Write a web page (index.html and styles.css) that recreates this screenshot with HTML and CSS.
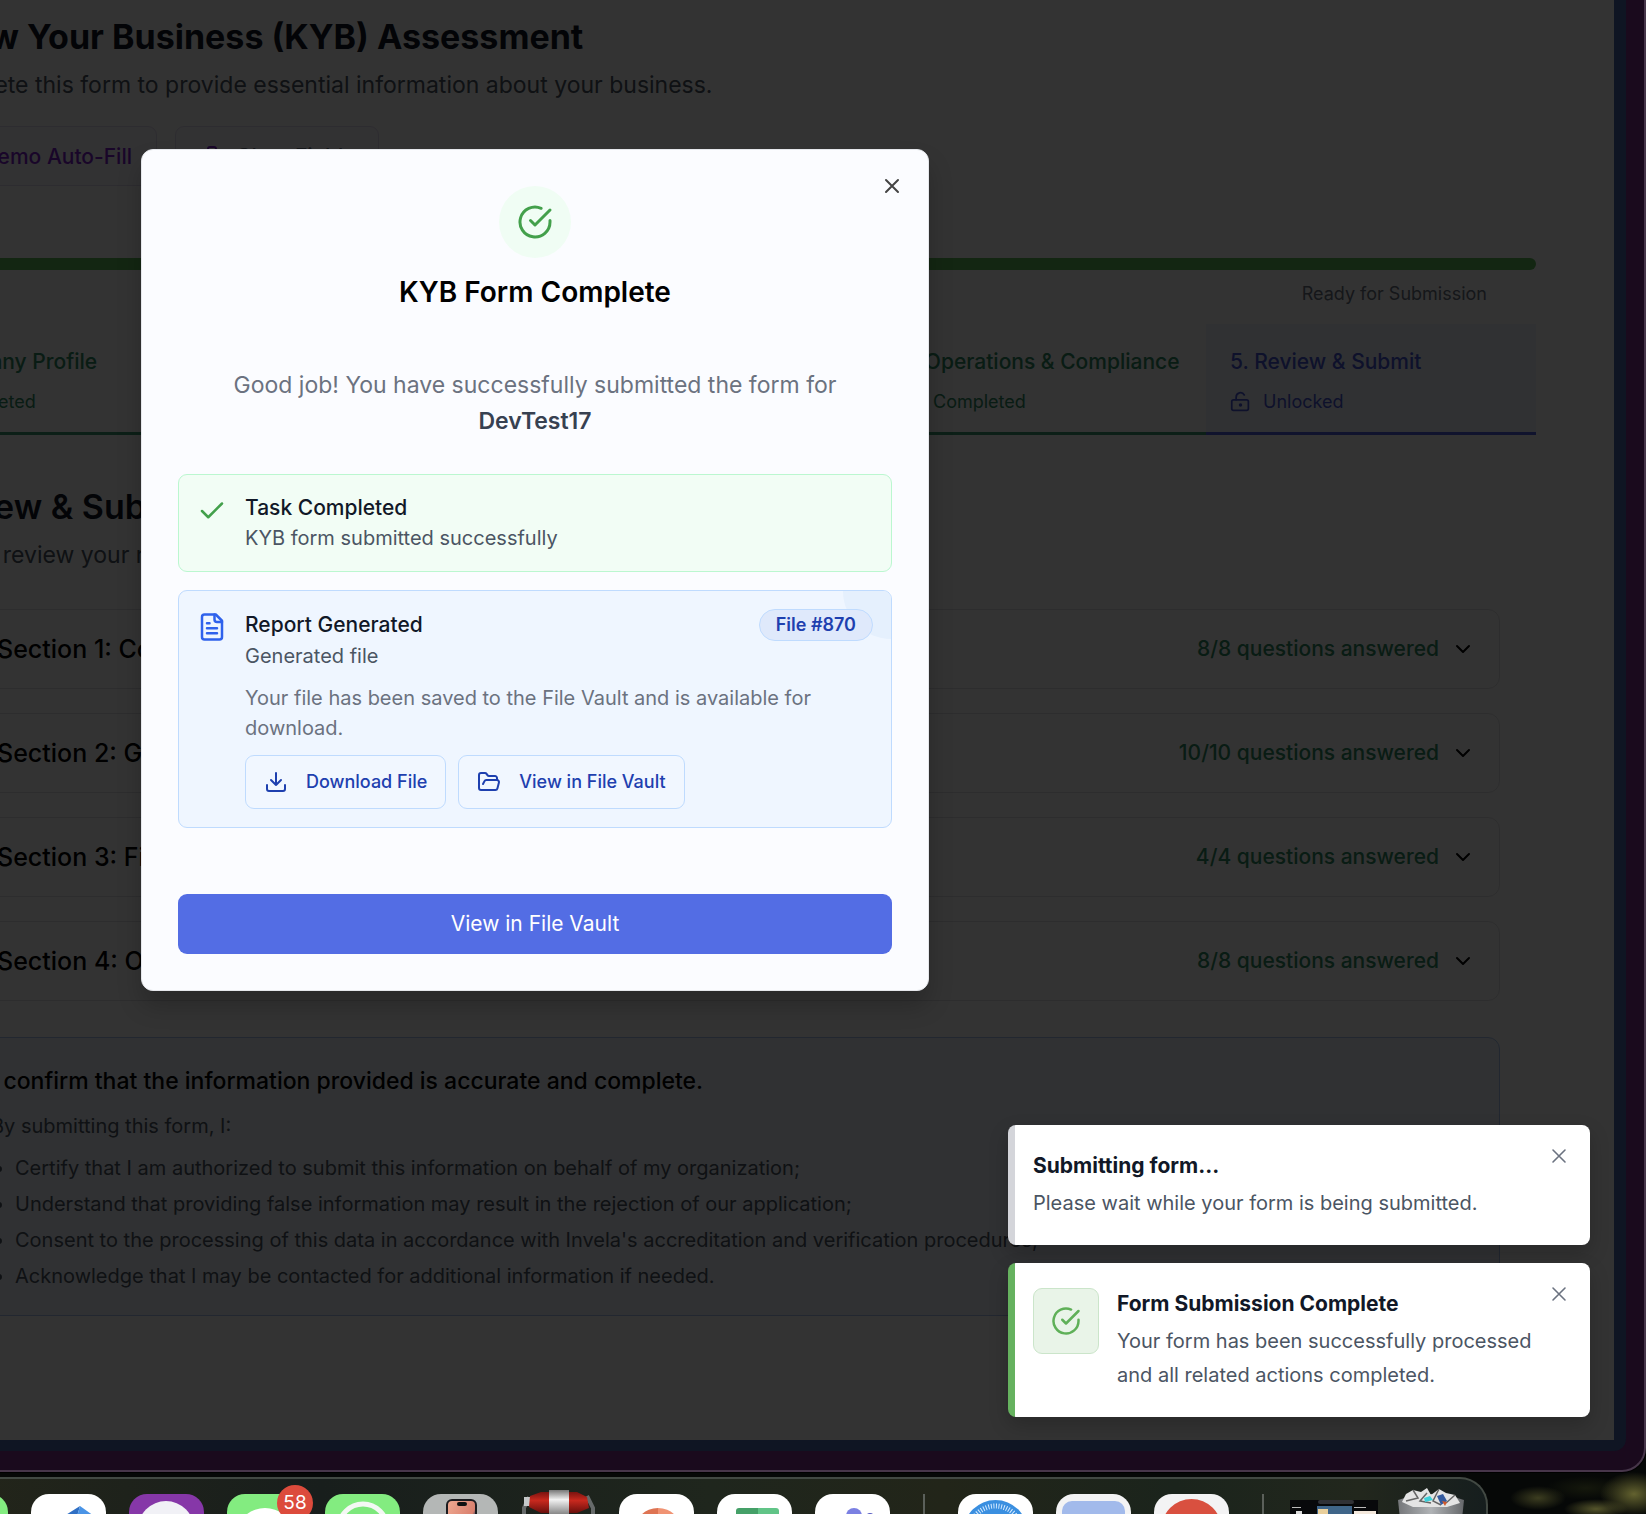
FILE: index.html
```html
<!DOCTYPE html>
<html lang="en">
<head>
<meta charset="utf-8">
<meta name="viewport" content="width=device-width, initial-scale=1">
<title>KYB Assessment</title>
<link rel="stylesheet" href="styles.css">
</head>
<body>
<svg class="sprite" aria-hidden="true">
  <symbol id="i-check-circle" viewBox="0 0 24 24"><path d="M22 11.08V12a10 10 0 1 1-5.93-9.14"/><path d="m9 11 3 3L22 4"/></symbol>
  <symbol id="i-check" viewBox="0 0 24 24"><path d="M20 6 9 17l-5-5"/></symbol>
  <symbol id="i-x" viewBox="0 0 24 24"><path d="M18 6 6 18M6 6l12 12"/></symbol>
  <symbol id="i-chevron" viewBox="0 0 24 24"><path d="m6 9 6 6 6-6"/></symbol>
  <symbol id="i-file" viewBox="0 0 24 24"><path d="M15 2H6a2 2 0 0 0-2 2v16a2 2 0 0 0 2 2h12a2 2 0 0 0 2-2V7Z"/><path d="M14 2v4a2 2 0 0 0 2 2h4M10 9H8M16 13H8M16 17H8"/></symbol>
  <symbol id="i-download" viewBox="0 0 24 24"><path d="M21 15v4a2 2 0 0 1-2 2H5a2 2 0 0 1-2-2v-4M7 10l5 5 5-5M12 15V3"/></symbol>
  <symbol id="i-folder" viewBox="0 0 24 24"><path d="m6 14 1.5-2.9A2 2 0 0 1 9.24 10H20a2 2 0 0 1 1.94 2.5l-1.54 6a2 2 0 0 1-1.95 1.5H4a2 2 0 0 1-2-2V5a2 2 0 0 1 2-2h3.9a2 2 0 0 1 1.69.9l.81 1.2a2 2 0 0 0 1.67.9H18a2 2 0 0 1 2 2v2"/></symbol>
  <symbol id="i-trash" viewBox="0 0 24 24"><path d="M3 6h18M19 6v14a2 2 0 0 1-2 2H7a2 2 0 0 1-2-2V6M8 6V4a2 2 0 0 1 2-2h4a2 2 0 0 1 2 2v2"/></symbol>
  <symbol id="i-unlock" viewBox="0 0 24 24"><circle cx="12" cy="16" r="1"/><rect x="2" y="10" width="19" height="12" rx="2"/><path d="M7 10V7a5 5 0 0 1 9.33-2.5"/></symbol>
</svg>

<div class="window">
  <div class="frame">
    <div class="viewport">
      <main class="page">
        <header class="intro">
          <h1>Know Your Business (KYB) Assessment</h1>
          <p class="lead">Complete this form to provide essential information about your business.</p>
        </header>
        <div class="tools">
          <button class="tool demo" type="button">Demo Auto-Fill</button>
          <button class="tool" type="button"><svg class="icon s24"><use href="#i-trash"/></svg>Clear Fields</button>
        </div>
        <div class="progress"></div>
        <p class="status">Ready for Submission</p>
        <nav class="tabs">
          <a class="tab" href="#s1"><span class="tab-name">1. Company Profile</span><span class="tab-state"><svg class="icon s21"><use href="#i-check-circle"/></svg>Completed</span></a>
          <a class="tab" href="#s2" aria-label="Section 2"></a>
          <a class="tab" href="#s3" aria-label="Section 3"></a>
          <a class="tab" href="#s4"><span class="tab-name">4. Operations &amp; Compliance</span><span class="tab-state"><svg class="icon s21"><use href="#i-check-circle"/></svg>Completed</span></a>
          <a class="tab current" href="#review"><span class="tab-name">5. Review &amp; Submit</span><span class="tab-state"><svg class="icon s21"><use href="#i-unlock"/></svg>Unlocked</span></a>
        </nav>
        <section class="review" id="review">
          <h2>Review &amp; Submit</h2>
          <p class="lead">Please review your responses</p>
          <div class="sections">
            <button class="section" type="button" id="s1"><span class="section-name">Section 1: Company</span><span class="answered">8/8 questions answered</span><svg class="icon s24"><use href="#i-chevron"/></svg></button>
            <button class="section" type="button" id="s2"><span class="section-name">Section 2: Governance</span><span class="answered">10/10 questions answered</span><svg class="icon s24"><use href="#i-chevron"/></svg></button>
            <button class="section" type="button" id="s3"><span class="section-name">Section 3: Financial</span><span class="answered">4/4 questions answered</span><svg class="icon s24"><use href="#i-chevron"/></svg></button>
            <button class="section" type="button" id="s4"><span class="section-name">Section 4: Operations</span><span class="answered">8/8 questions answered</span><svg class="icon s24"><use href="#i-chevron"/></svg></button>
          </div>
          <div class="consent">
            <p class="consent-title">I confirm that the information provided is accurate and complete.</p>
            <p class="consent-sub">By submitting this form, I:</p>
            <ul>
              <li>Certify that I am authorized to submit this information on behalf of my organization;</li>
              <li>Understand that providing false information may result in the rejection of our application;</li>
              <li>Consent to the processing of this data in accordance with Invela's accreditation and verification procedures;</li>
              <li>Acknowledge that I may be contacted for additional information if needed.</li>
            </ul>
          </div>
        </section>
      </main>

      <div class="overlay">
        <div class="modal" role="dialog" aria-modal="true" aria-labelledby="done-title">
          <button class="close modal-close" type="button" aria-label="Close"><svg class="icon s24"><use href="#i-x"/></svg></button>
          <div class="badge-ok"><svg class="icon s36"><use href="#i-check-circle"/></svg></div>
          <h2 class="modal-title" id="done-title">KYB Form Complete</h2>
          <p class="modal-text">Good job! You have successfully submitted the form for <strong>DevTest17</strong></p>
          <div class="card card-ok">
            <svg class="icon s30"><use href="#i-check"/></svg>
            <div class="card-body">
              <h3>Task Completed</h3>
              <p>KYB form submitted successfully</p>
            </div>
          </div>
          <div class="card card-file">
            <svg class="icon s30"><use href="#i-file"/></svg>
            <div class="card-body">
              <div class="card-head"><h3>Report Generated</h3><span class="pill">File #870</span></div>
              <p>Generated file</p>
              <p class="note">Your file has been saved to the File Vault and is available for download.</p>
              <div class="actions">
                <button class="action" type="button"><svg class="icon s24"><use href="#i-download"/></svg>Download File</button>
                <button class="action" type="button"><svg class="icon s24"><use href="#i-folder"/></svg>View in File Vault</button>
              </div>
            </div>
          </div>
          <button class="primary" type="button">View in File Vault</button>
        </div>
      </div>

      <div class="toasts">
        <div class="toast" role="status">
          <div class="toast-body">
            <p class="toast-title">Submitting form...</p>
            <p class="toast-text">Please wait while your form is being submitted.</p>
          </div>
          <button class="close toast-close" type="button" aria-label="Dismiss"><svg class="icon s24 thin"><use href="#i-x"/></svg></button>
        </div>
        <div class="toast toast-ok" role="status">
          <div class="toast-icon"><svg class="icon s30"><use href="#i-check-circle"/></svg></div>
          <div class="toast-body">
            <p class="toast-title">Form Submission Complete</p>
            <p class="toast-text">Your form has been successfully processed and all related actions completed.</p>
          </div>
          <button class="close toast-close" type="button" aria-label="Dismiss"><svg class="icon s24 thin"><use href="#i-x"/></svg></button>
        </div>
      </div>
    </div>
  </div>
</div>

<div class="dock">
  <div class="app green"></div>
  <div class="app"><svg viewBox="0 0 75 75"><path d="M30 24 49 12 41 40 22 40Z" fill="#2f6fc4"/><path d="M49 12 63 22V40H41Z" fill="#4a94e6"/></svg></div>
  <div class="app purple"><svg viewBox="0 0 75 75"><circle cx="37" cy="35" r="28" fill="#f1f1f6"/></svg></div>
  <div class="app green"><svg viewBox="0 0 75 75"><ellipse cx="38" cy="36" rx="26" ry="22" fill="#fff"/></svg><span class="count">58</span></div>
  <div class="app green"><svg viewBox="0 0 75 75"><circle cx="38" cy="34" r="24" fill="#7de87c" stroke="#f4f8f4" stroke-width="5"/></svg></div>
  <div class="app gray"><svg viewBox="0 0 75 75"><defs><linearGradient id="ph" x1="0" x2="1" y2="1"><stop stop-color="#f0aa92"/><stop offset=".55" stop-color="#d9806e"/><stop offset=".6" stop-color="#6d5560"/><stop offset="1" stop-color="#c59d9d"/></linearGradient></defs><rect x="24" y="6" width="29" height="60" rx="5" fill="url(#ph)" stroke="#1c1c20" stroke-width="2"/><rect x="34" y="8" width="10" height="4" rx="2" fill="#111"/></svg></div>
  <div class="app bare"><svg viewBox="0 0 75 75"><defs><linearGradient id="st" x2="0" y2="1"><stop stop-color="#777"/><stop offset=".4" stop-color="#f2f2f2"/><stop offset="1" stop-color="#888"/></linearGradient><linearGradient id="rd" x2="0" y2="1"><stop stop-color="#7a130f"/><stop offset=".4" stop-color="#c8291e"/><stop offset="1" stop-color="#6a0f0c"/></linearGradient></defs><path d="M3 40V14L8 3M72 40V14L66 2" stroke="#666a6a" stroke-width="4" fill="none"/><path d="M8 20h60v24H6Z" fill="#cfcfd2"/><rect x="3" y="3" width="8" height="9" fill="#c5c9ca"/><path d="M9 2 20-2H56l10 5 2 11-12 5H20L8 13Z" fill="url(#rd)"/><rect x="28" y="-4" width="20" height="24" fill="url(#st)"/></svg></div>
  <div class="app"><svg viewBox="0 0 75 75"><path d="M39 14a24 24 0 0 0-24 24h24Z" fill="#de7453"/><path d="M39 14a24 24 0 0 1 24 24H39Z" fill="#f09373"/></svg></div>
  <div class="app"><svg viewBox="0 0 75 75"><path d="M19 40V17q0-3 3-3h19v26Z" fill="#45a068"/><path d="M41 14h18q3 0 3 3v23H41Z" fill="#61c487"/></svg></div>
  <div class="app"><svg viewBox="0 0 75 75"><circle cx="39" cy="22" r="8" fill="#7b80e2"/><circle cx="55" cy="24" r="5" fill="#5459c0"/><path d="M24 32h30v10H24Z" fill="#6268cf"/></svg></div>
  <div class="divider"></div>
  <div class="app"><svg viewBox="0 0 75 75"><circle cx="37.500" cy="38" r="32" fill="#3a8fe0"/><circle cx="37.500" cy="38" r="26" fill="none" stroke="#d6ebff" stroke-width="5" stroke-dasharray="1 1.600"/></svg></div>
  <div class="app pale"><svg viewBox="0 0 75 75"><rect x="6" y="7" width="63" height="60" rx="10" fill="#a2baeb"/></svg></div>
  <div class="app pale"><svg viewBox="0 0 75 75"><circle cx="37.500" cy="35" r="30" fill="#d9503f"/></svg></div>
  <div class="divider"></div>
  <div class="thumb"><svg viewBox="0 0 88 50"><rect width="88" height="50" fill="#08090b"/><rect x="28" width="36" height="4" rx="2" fill="#303136"/><rect x="27" y="6" width="35" height="40" fill="#3f6589"/><rect x="28" y="9" width="10" height="6" fill="#e9cf9b"/><rect x="64" y="11" width="22" height="4" fill="#f3e8dc"/><rect x="6" y="11" width="6" height="3" fill="#ddd"/><rect x="2" y="7" width="9" height="1" fill="#bbb"/><rect x="64" y="7" width="12" height="1" fill="#bbb"/></svg></div>
  <div class="bin"><svg viewBox="0 0 68 60"><defs><linearGradient id="bn"><stop stop-color="#75777a"/><stop offset=".5" stop-color="#b0b3b6"/><stop offset="1" stop-color="#66686b"/></linearGradient></defs><path d="M1 12Q34 0 67 12L62 60H6Z" fill="url(#bn)"/><path d="M5 14 9 6 16 2 24 4 30 0 34 7 42 1 49 5 58 7 63 15 50 19H16Z" fill="#e4e4e4"/><path d="m16 2 5 8-12 3M30 5l-7 8 11 2M42 1l-6 12 8 4M58 7l-9 8" stroke="#666" stroke-width="1.500" fill="none"/><path d="m27 10 6-2 3 4-8 2Z" fill="#3ed0d8"/><path d="m40 8 6-2 4 7-6 4Z" fill="#345a9e"/><path d="m45 13 5 1-2 4Z" fill="#d05a2c"/></svg></div>
</div>
</body>
</html>
```
FILE: styles.css
```css
* { box-sizing: border-box; }
body {
  margin: 0;
  height: 100vh;
  overflow: hidden;
  display: flex;
  flex-direction: column;
  gap: 5px;
  font-family: Inter, "Liberation Sans", sans-serif;
  font-size: 21px;
  line-height: 30px;
  color: #111827;
  background:
    radial-gradient(ellipse 34px 22px at right 12px bottom 20px, #63622f, transparent),
    radial-gradient(ellipse 32px 10px at right 50px bottom 5px, #55552b, transparent),
    radial-gradient(ellipse 28px 12px at right 108px bottom 16px, #3c3d20, transparent),
    radial-gradient(ellipse 40px 12px at right 60px bottom 26px, #15180c, transparent),
    #060807;
}
h1, h2, h3, p, ul { margin: 0; }
button { font: inherit; color: inherit; margin: 0; cursor: pointer; }
.sprite { position: absolute; width: 0; height: 0; }
.icon { flex: none; display: block; fill: none; stroke: currentColor; stroke-width: 2; stroke-linecap: round; stroke-linejoin: round; }
.thin { stroke-width: 1.6; }
.s21 { width: 21px; height: 21px; }
.s24 { width: 24px; height: 24px; }
.s30 { width: 30px; height: 30px; }
.s36 { width: 36px; height: 36px; }

/* browser window */
.window {
  flex: 1;
  min-height: 0;
  display: flex;
  padding: 0 18px 19px 0;
  background: #1a0a1d;
  border: solid #47364a;
  border-width: 0 2px 2px 0;
  border-bottom-right-radius: 24px;
  box-shadow: 0 0 0 1px #000;
}
.frame { flex: 1; min-width: 0; display: flex; padding: 0 12px 11px 0; background: #0f1523; border-bottom-right-radius: 12px; }
.viewport { flex: 1; min-width: 0; position: relative; overflow: hidden; background: #fff; }

/* form page */
.page { margin-left: -114px; padding: 15px 78px 0 0; color: #000; }
.intro { padding-left: 38px; }
h1 { font-size: 34px; line-height: 44px; font-weight: 700; color: #111827; white-space: nowrap; }
h2 { font-size: 34px; line-height: 44px; font-weight: 600; color: #111827; }
.lead { margin-top: 8px; font-size: 23px; line-height: 36px; color: #4b5563; white-space: nowrap; }
.tools { display: flex; gap: 18px; margin: 23px 0 0 18px; }
.tool { display: flex; align-items: center; gap: 12px; height: 60px; padding: 2px 24px 0; border: 1px solid #e0dcf0; border-radius: 9px; background: #faf8ff; font-weight: 500; color: #6b7280; }
.tool .icon { color: #7e22ce; }
.demo { width: 253px; justify-content: flex-end; color: #7e22ce; }
.progress { height: 12px; margin-top: 72px; border-radius: 6px; background: #5fbf5c; }
.status { margin-top: 12px; padding-right: 49px; text-align: right; font-size: 18px; line-height: 24px; color: #6b7280; }
.tabs { display: grid; grid-template-columns: repeat(5, 1fr); margin-top: 18px; }
.tab { display: flex; flex-direction: column; gap: 12px; padding: 23px 24px 18px; border-bottom: 3px solid #3d9b72; background: #fcfcfc; color: #2f8a63; text-decoration: none; white-space: nowrap; }
.tab-name { font-weight: 500; }
.tab-state { display: flex; align-items: center; gap: 12px; font-size: 18px; line-height: 25px; }
.current { background: #eff3ff; border-color: #4f5fe0; color: #4757d6; }
.review { padding: 50px 36px 0 38px; }
.sections { display: grid; gap: 24px; margin-top: 36px; }
.section { display: flex; align-items: center; height: 80px; padding: 0 24px 0 72px; border: 1px solid #e2e2e5; border-radius: 12px; background: none; text-align: left; }
.section-name { flex: 1; font-size: 25px; font-weight: 500; }
.answered { margin-right: 12px; font-weight: 500; color: #2f8a63; }
.consent { margin-top: 36px; padding: 25px 36px 21px 66px; border: 1px solid #a8c4ee; border-radius: 12px; background: #f0f6ff; color: #4b5563; font-size: 20px; white-space: nowrap; }
.consent-title { font-size: 23px; line-height: 36px; font-weight: 500; color: #000; }
.consent-sub { margin-top: 12px; }
.consent ul { margin-top: 9px; padding-left: 24px; line-height: 36px; }

/* dialog */
.overlay { position: absolute; inset: -300px 0 0 -544px; display: flex; align-items: center; justify-content: center; background: rgba(0, 0, 0, 0.8); }
.modal { position: relative; display: flex; flex-direction: column; align-items: stretch; width: 788px; padding: 36px; border: 1px solid #e5e7eb; border-radius: 12px; background: #fbfcff; box-shadow: 0 15px 24px rgba(0, 0, 0, 0.2); }
.close { display: flex; padding: 0; border: 0; background: none; color: #6b7280; }
.modal-close { position: absolute; top: 24px; right: 24px; color: #444; }
.badge-ok { align-self: center; display: flex; align-items: center; justify-content: center; width: 72px; height: 72px; border-radius: 50%; background: #f0fdf4; color: #43a04b; }
.modal-title { margin-top: 16px; font-size: 28px; line-height: 36px; text-align: center; color: #000; }
.modal-text { margin: 57px 36px 35px; font-size: 23px; line-height: 36px; text-align: center; color: #6b7280; }
.modal-text strong { display: block; font-weight: 600; color: #374151; }
.card { position: relative; display: flex; gap: 18px; padding: 18px; border: 1px solid; border-radius: 9px; overflow: hidden; color: #4b5563; font-size: 20px; }
.card > .icon { margin-top: 3px; }
.card-ok { background: #f2fdf5; border-color: #bbf7d0; }
.card-ok > .icon { color: #43a04b; }
.card-file { margin-top: 18px; background: #eff6ff; border-color: #bfdbfe; }
.card-file > .icon { color: #2f62ec; }
.card-file::before { content: ""; position: absolute; top: -48px; right: -48px; width: 96px; height: 96px; border-radius: 50%; background: #e5f0fd; }
.card-body { flex: 1; position: relative; }
h3 { font-size: 21px; line-height: 30px; font-weight: 500; color: #111827; }
.card-head { display: flex; align-items: center; justify-content: space-between; }
.pill { padding: 0 16px; border: 1px solid #bfdbfe; border-radius: 16px; background: #dfe9fb; font-size: 18px; font-weight: 600; color: #1e40af; }
.note { margin-top: 12px; color: #6b7280; }
.actions { display: flex; gap: 12px; margin-top: 12px; }
.action { display: flex; align-items: center; gap: 18px; height: 54px; padding: 0 18px; border: 1px solid #bfdbfe; border-radius: 9px; background: #f1f7ff; font-size: 18px; font-weight: 500; color: #1e40af; }
.primary { height: 60px; margin-top: 66px; border: 0; border-radius: 9px; background: #536de4; color: #fff; }

/* notifications */
.toasts { position: absolute; right: 24px; bottom: 23px; width: 582px; display: grid; gap: 18px; }
.toast { position: relative; display: flex; gap: 18px; padding: 25px; border-radius: 8px; overflow: hidden; background: linear-gradient(90deg, #d4d5da 7px, #fff 7px); box-shadow: 0 8px 20px rgba(0, 0, 0, 0.2); }
.toast-ok { background: linear-gradient(90deg, #66b25f 7px, #fff 7px); }
.toast-icon { display: flex; flex: none; align-items: center; justify-content: center; width: 66px; height: 66px; border: 1px solid #cbe5ca; border-radius: 9px; background: #e9f4e8; color: #5fb058; }
.toast-body { flex: 1; }
.toast-title { line-height: 32px; font-weight: 700; }
.toast-text { margin-top: 4px; padding-right: 20px; font-size: 20px; line-height: 34px; color: #4b5563; }
.toast-close { position: absolute; top: 19px; right: 19px; }

/* dock */
.dock { flex: none; align-self: flex-start; display: flex; gap: 23px; height: 37px; margin-left: -67px; padding: 15px 21px 0 0; border: solid #424943; border-width: 2px 2px 0 0; border-top-right-radius: 28px; background: linear-gradient(90deg, #24261a, #181e1c 25%, #1f261d 50%, #222519 65%, #1b241c 80%, #22271d 92%, #161e1e); }
.app { position: relative; flex: none; width: 75px; height: 75px; border-radius: 18px; background: #fff; }
.app svg, .thumb svg, .bin svg { display: block; width: 100%; overflow: visible; }
.green { background: #83ec80; }
.purple { background: #8637a8; }
.gray { background: #b4b7b6; }
.pale { background: #f3f3f4; }
.bare { background: none; }
.count { position: absolute; top: -9px; right: -11px; width: 36px; height: 36px; border-radius: 50%; background: #dc4b3c; color: #fff; font-size: 19px; line-height: 36px; text-align: center; }
.divider { flex: none; width: 2px; height: 60px; margin: 0 10px; background: #5b605a; }
.thumb { flex: none; width: 88px; margin: 6px 0 0 -7px; }
.bin { flex: none; width: 68px; margin: -6px 0 0 -4px; }
```
